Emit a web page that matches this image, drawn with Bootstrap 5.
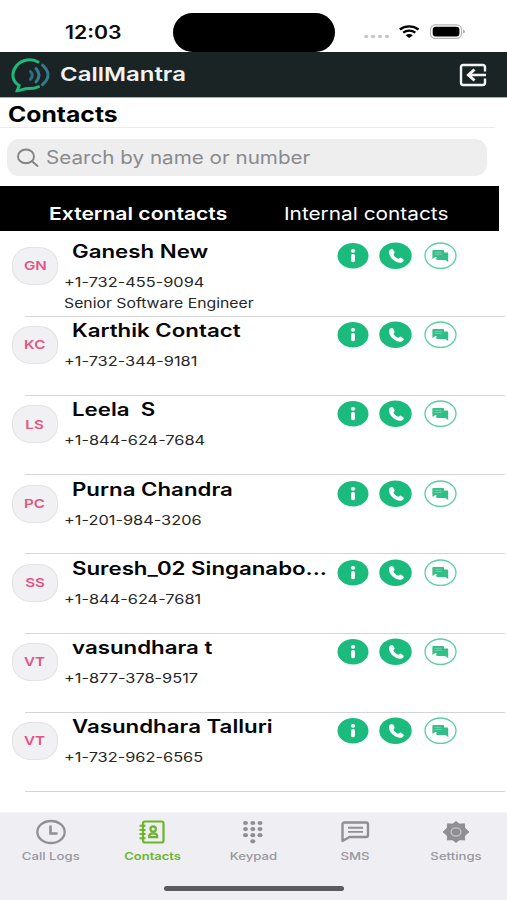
<!DOCTYPE html>
<html lang="en">
<head>
<meta charset="utf-8">
<meta name="viewport" content="width=device-width, initial-scale=1">
<title>CallMantra – Contacts</title>
<link href="https://cdn.jsdelivr.net/npm/bootstrap@5.3.0/dist/css/bootstrap.min.css" rel="stylesheet">
<style>
body{font-family:Inter,"Liberation Sans",sans-serif;color:#0b0b0b;background:#fff;width:507px;height:900px;overflow:hidden}
.wide{display:inline-block;transform:scaleX(var(--sx,1.22));transform-origin:left center;white-space:pre;line-height:1}
.mid{transform-origin:center}
.status{height:52px}
.clock{font-size:18px;font-weight:600;margin:19px 0 0 65px;width:108px;--sx:1.18}
.island{width:162px;height:39px;border-radius:20px;background:#000;margin-top:13px}
.brandbar{height:46px;background:#1b2424;border-bottom:1px solid #a9adad;padding-left:11px;padding-right:20px}
.brandname{font-size:19px;font-weight:600;color:#f1f3f3;--sx:1.26}
.heading{height:30px;border-bottom:1px solid #ececec;width:495px;padding-left:8px}
.heading h1{font-size:21px;font-weight:700;margin:6px 0 0;color:#000;--sx:1.177}
.searchbox{margin:11px 0 0 7px;width:480px;height:37px;border-radius:12px;background:#eee;color:#8a8a8e;font-size:18px;padding-left:10px;gap:7px;--sx:1.146}
.switcher{margin-top:10px;width:499px;height:45px;background:#000;color:#fff;padding-top:15px;font-size:17.9px}
.external{width:284px;padding-left:49px;--sx:1.18}
.internal{--sx:1.163}
.people{padding-top:6px}
.person{height:79.2px;position:relative;padding-left:12px}
.person::after{content:"";position:absolute;left:25px;right:2px;bottom:-.6px;height:1px;background:#d4d4d6}
.avatar{width:46px;height:38px;border-radius:19px/17px;background:#f1f0f3;border:1px solid #e3e2e5;color:#e05584;font-size:12.4px;font-weight:600;margin-top:10px;padding-top:1px;flex:none}
.who{width:279px;padding-left:6px;flex:none}
.name{font-size:18px;font-weight:600;height:20px;margin:5px 0 0 8px;line-height:20px;color:#050505;--sx:1.237}
.line{font-size:13px;line-height:21px;height:21px;color:#262626;--sx:1.214}
.line.first{margin-top:10px;--sx:1.258}
.acts{margin-top:5px}
.tabs{position:fixed;left:0;top:812px;width:507px;height:88px;background:#efeef3;color:#98989d;border-top:1px solid #f5f5f7}
.tab{width:101.2px;padding:6px 0 0 1px;font-size:10.8px;font-weight:500;line-height:1}
.tab svg{height:26px;display:block}
.tab .wide{margin-top:7px}
.tab.on{color:#6db52c;font-weight:600;--sx:1.2}
.homebar{position:absolute;left:164px;top:73px;width:180px;height:5px;border-radius:3px;background:#5a595d}
</style>
</head>
<body>
<svg width="0" height="0" class="position-absolute" aria-hidden="true">
<symbol id="acts" viewBox="0 0 120 28">
<ellipse cx="16" cy="13.700" rx="15.500" ry="12.800" fill="#1abb7c"/>
<ellipse cx="16" cy="8.800" rx="2.200" ry="1.900" fill="#fff"/><rect x="14" y="12" width="4" height="8.300" rx="1.800" fill="#fff"/>
<ellipse cx="58.500" cy="13.700" rx="16.200" ry="13.300" fill="#1abb7c"/>
<path d="M52.400 8.400c1-1.600 2.800-2 3.700-.9l1.400 2.400c.5 1-.7 1.900-1 2.700.8 2 2.400 3.400 4.600 4.200.9-.3 1.800-1.700 2.900-1.100l2.200 1.500c1.200.9.4 2.300-.9 3-2.200 1.300-5.800.6-9.200-2.400-3.500-3.100-4.800-7.100-3.700-9.400z" fill="#fff"/>
<ellipse cx="103.500" cy="13.700" rx="15.500" ry="12.700" fill="#fff" stroke="#5bcfa2" stroke-width="1.300"/>
<path d="M107 10.500h3.500q.7 0 .7.700v8.700l-2.900-2h-8.300q-.7 0-.7-.7v-1.700z" fill="#2fbf87"/>
<path d="M96.100 8h10.200q.7 0 .7.700v5.600q0 .7-.7.700h-8.100l-2.800 2.100V8.700q0-.7.700-.7z" fill="#35bd88"/>
<path d="M97.700 10.300h7M97.700 12.400h7" stroke="#8bdcbb" stroke-width=".7"/>
</symbol>
</svg>

<header>
<div class="status d-flex">
<div class="clock"><span class="wide">12:03</span></div>
<div class="island"></div>
<svg width="110" height="24" viewBox="0 0 110 24" style="margin:20px 0 0 23px">
<g fill="#c6c6c8"><ellipse cx="8.200" cy="16.500" rx="2.100" ry="1.800"/><ellipse cx="15" cy="16.500" rx="2.100" ry="1.800"/><ellipse cx="22" cy="16.500" rx="2.100" ry="1.800"/><ellipse cx="29" cy="16.500" rx="2.100" ry="1.800"/></g>
<g fill="none" stroke="#000" stroke-width="2.300"><path d="M41.800 9.500c5.400-4.200 13.200-4.200 18.800 0"/><path d="M45.200 12.700c3.600-2.900 8.600-2.900 12.100 0"/></g>
<path d="M47.600 15.200c2.300-1.500 5-1.500 7.300 0L51.200 18z"/>
<rect x="72.500" y="4.800" width="31" height="13.600" rx="4.600" fill="#fff" stroke="#b5b5b5" stroke-width="1.200"/><rect x="74.700" y="6.700" width="26.700" height="9.800" rx="3"/><path d="M105.200 9.400c2.100.8 2.100 3.400 0 4.200z" fill="#999"/>
</svg>
</div>
<div class="brandbar d-flex align-items-center">
<svg width="42" height="38" viewBox="0 0 42 38" fill="none" stroke-linecap="round">
<path d="M27 6C21 2 11 3.500 5.500 9.700c-6 7.500-4 16.300 2.600 19.800L6.200 34.700c4.800-.3 6.800-2.500 11.800-2.100 4 .1 6.500-.2 9.500-1.900" stroke="#21b67c" stroke-width="3"/>
<path d="M19.500 15.500q3.500 3.800 0 7.800" stroke="#316b80" stroke-width="3"/><path d="M25 12.500q6 6.700 0 13.500" stroke="#39798e" stroke-width="3"/><path d="M31.500 9.200q11 9.900 0 19.500" stroke="#37788c" stroke-width="3"/>
</svg>
<span class="wide brandname" style="margin-left:7px">CallMantra</span>
<svg class="ms-auto" width="28" height="24" viewBox="0 0 28 24" fill="none" stroke="#f4f6f6" stroke-width="2.400">
<path d="M26 8.500V4.200Q26 2 23.800 2H4.200Q2 2 2 4.200V19.800Q2 22 4.200 22H23.800Q26 22 26 19.800V15.500M27 12H10"/><path d="M15.500 6.500L9.500 12l6 5.500" stroke-width="3"/>
</svg>
</div>
</header>

<main>
<div class="heading"><h1 class="wide">Contacts</h1></div>
<div class="searchbox d-flex align-items-center">
<svg width="22" height="20" viewBox="0 0 22 20" fill="none" stroke="#838387" stroke-width="1.900" stroke-linecap="round"><ellipse cx="9" cy="8.400" rx="8" ry="6.900"/><path d="M15 13.200l5.500 4.800"/></svg>
<span class="wide">Search by name or number</span>
</div>
<nav class="switcher d-flex">
<div class="external"><span class="wide fw-semibold">External contacts</span></div>
<div class="internal"><span class="wide">Internal contacts</span></div>
</nav>
<section class="people">
<div class="person d-flex align-items-start"><div class="avatar d-flex align-items-center justify-content-center"><span class="wide mid">GN</span></div><div class="who"><div class="name"><span class="wide">Ganesh New</span></div><div class="line first"><span class="wide">+1-732-455-9094</span></div><div class="line"><span class="wide">Senior Software Engineer</span></div></div><svg class="acts" width="120" height="28"><use href="#acts"/></svg></div>
<div class="person d-flex align-items-start"><div class="avatar d-flex align-items-center justify-content-center"><span class="wide mid">KC</span></div><div class="who"><div class="name"><span class="wide">Karthik Contact</span></div><div class="line first"><span class="wide">+1-732-344-9181</span></div></div><svg class="acts" width="120" height="28"><use href="#acts"/></svg></div>
<div class="person d-flex align-items-start"><div class="avatar d-flex align-items-center justify-content-center"><span class="wide mid">LS</span></div><div class="who"><div class="name"><span class="wide">Leela  S</span></div><div class="line first"><span class="wide">+1-844-624-7684</span></div></div><svg class="acts" width="120" height="28"><use href="#acts"/></svg></div>
<div class="person d-flex align-items-start"><div class="avatar d-flex align-items-center justify-content-center"><span class="wide mid">PC</span></div><div class="who"><div class="name"><span class="wide">Purna Chandra</span></div><div class="line first"><span class="wide">+1-201-984-3206</span></div></div><svg class="acts" width="120" height="28"><use href="#acts"/></svg></div>
<div class="person d-flex align-items-start"><div class="avatar d-flex align-items-center justify-content-center"><span class="wide mid">SS</span></div><div class="who"><div class="name"><span class="wide">Suresh_02 Singanabo...</span></div><div class="line first"><span class="wide">+1-844-624-7681</span></div></div><svg class="acts" width="120" height="28"><use href="#acts"/></svg></div>
<div class="person d-flex align-items-start"><div class="avatar d-flex align-items-center justify-content-center"><span class="wide mid">VT</span></div><div class="who"><div class="name"><span class="wide">vasundhara t</span></div><div class="line first"><span class="wide">+1-877-378-9517</span></div></div><svg class="acts" width="120" height="28"><use href="#acts"/></svg></div>
<div class="person d-flex align-items-start"><div class="avatar d-flex align-items-center justify-content-center"><span class="wide mid">VT</span></div><div class="who"><div class="name"><span class="wide">Vasundhara Talluri</span></div><div class="line first"><span class="wide">+1-732-962-6565</span></div></div><svg class="acts" width="120" height="28"><use href="#acts"/></svg></div>
</section>
</main>

<footer class="tabs d-flex">
<div class="tab d-flex flex-column align-items-center"><svg width="32" viewBox="0 0 32 26" fill="none" stroke="#8f8f94"><ellipse cx="16" cy="13" rx="13.700" ry="11" stroke-width="2.300"/><path d="M15.500 6.500v8h7" stroke-width="2.600"/></svg><span class="wide mid">Call Logs</span></div>
<div class="tab on d-flex flex-column align-items-center"><svg width="28" viewBox="0 0 28 26" fill="none" stroke="#6db52c" stroke-width="2.200"><rect x="5" y="2.500" width="20.500" height="21" rx="2"/><path d="M1.500 6.800h6M1.500 10.900h6M1.500 15.100h6M1.500 19.200h6" stroke-width="2"/><ellipse cx="15.200" cy="10" rx="2.700" ry="2.600"/><path d="M11.200 18.200v-.8q0-3 4-3t4 3v.8z" stroke-width="2.200"/></svg><span class="wide mid">Contacts</span></div>
<div class="tab d-flex flex-column align-items-center"><svg width="26" viewBox="0 0 26 26" fill="#8f8f94"><g id="dots"><ellipse cx="5.500" cy="4" rx="2.500" ry="2.100"/><ellipse cx="12.800" cy="4" rx="2.500" ry="2.100"/><ellipse cx="20" cy="4" rx="2.500" ry="2.100"/></g><use href="#dots" y="6.100"/><use href="#dots" y="12.200"/><ellipse cx="12.800" cy="22.300" rx="2.500" ry="2.100"/></svg><span class="wide mid">Keypad</span></div>
<div class="tab d-flex flex-column align-items-center"><svg width="30" viewBox="0 0 30 26" fill="none" stroke="#8f8f94" stroke-width="2.400" stroke-linejoin="round"><path d="M2.500 22V5.500Q2.500 3.500 4.500 3.500H26Q28 3.500 28 5.500V16Q28 18 26 18H9.500z"/><path d="M8 8.700h15M8 12.900h15" stroke-width="1.900"/></svg><span class="wide mid">SMS</span></div>
<div class="tab d-flex flex-column align-items-center"><svg width="30" viewBox="0 0 30 26" fill="#8f8f94"><ellipse cx="15" cy="13" rx="10.300" ry="8.700"/><path d="M15 2.500l3.400 2.700 5.200-.4v4.300L28 13l-4.400 3.500v4.500l-5.200-.4L15 23.500l-3.400-2.900-5.200.4v-4.500L2 13l4.400-3.900V4.800l5.200.4z" stroke="#8f8f94" stroke-linejoin="round"/><ellipse cx="15" cy="13" rx="4.900" ry="4.100" fill="none" stroke="#c5c5ca" stroke-width="1.300"/></svg><span class="wide mid">Settings</span></div>
<div class="homebar"></div>
</footer>
<script src="https://cdn.jsdelivr.net/npm/bootstrap@5.3.0/dist/js/bootstrap.bundle.min.js"></script>
</body>
</html>
